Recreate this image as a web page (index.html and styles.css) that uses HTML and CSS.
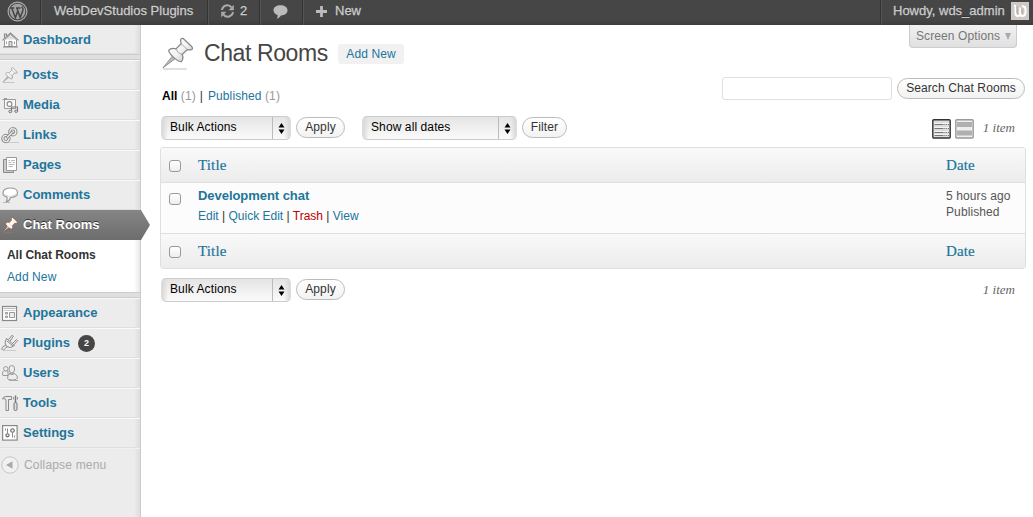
FILE: index.html
```html
<!DOCTYPE html>
<html lang="en">
<head>
<meta charset="utf-8">
<title>Chat Rooms</title>
<link rel="stylesheet" href="styles.css">
</head>
<body>
<svg class="defs" width="0" height="0">
  <defs>
    <linearGradient id="pinfill" x1="0" y1="0" x2="1" y2="1"><stop offset="0" stop-color="#fff"/><stop offset=".5" stop-color="#f4f4f4"/><stop offset="1" stop-color="#bbb"/></linearGradient>
    <symbol id="pin" viewBox="0 0 30 32">
      <path d="M1 31H24" stroke="#999" stroke-opacity=".6"/>
      <path d="M10.500 18 L.8 30 L13.500 20.500Z" fill="#bbb" stroke="#888" stroke-width=".8"/>
      <path d="M18 3.500 Q18 .8 20.500 1.500 L29 9.500 Q30.500 12.500 27 12.500 L24.500 12.200 L19.500 17 Q21.500 21 18.500 24 Q16 24 11.500 20 Q6.500 15.500 6.500 12.800 Q9 10 13.500 11.500 L18.500 6.500Z" class="pinbody"/>
      <path d="M18.500 6.500L24.500 12.200M13.500 11.500Q15 16 19.500 17" class="pinline"/>
    </symbol>
  </defs>
</svg>

<header class="adminbar">
  <a class="bar-item bar-logo">
    <svg width="21" height="21" viewBox="0 0 21 21"><circle cx="10.500" cy="10.500" r="9.400" fill="none" stroke="#aaa" stroke-width="1.200"/><circle cx="10.500" cy="10.500" r="7.800" fill="#a2a2a2"/><path d="M3.300 7h4M9 7h4.500M4.800 7.200L8.400 16.800L10.900 9.500M10 7.200L13.200 16.600L16 9.200Q16.300 7 14.700 5.600" fill="none" stroke="#464646" stroke-width="1.500"/></svg>
  </a>
  <a class="bar-item bar-site">WebDevStudios Plugins</a>
  <a class="bar-item bar-updates">
    <svg width="15" height="14" viewBox="0 0 15 14"><path d="M2 6A5.300 5.300 0 0 1 11.500 3.400M13 8A5.300 5.300 0 0 1 3.500 10.600" fill="none" stroke="#aaa" stroke-width="2"/><path d="M13.800 .8V6.200H8.600ZM1.200 13.200V7.800H6.400Z" fill="#aaa"/></svg>
    <span>2</span>
  </a>
  <a class="bar-item bar-comments">
    <svg width="15" height="14" viewBox="0 0 15 14"><path d="M7.500 .2C11.600 .2 14.500 2.200 14.500 5.300S11.900 10.300 8 10.400C7 12 5.500 13.200 3.800 13.800Q4.900 11.500 4.600 9.900C2.100 9.200 .5 7.600 .5 5.300C.5 2.200 3.400 .2 7.500 .2Z" fill="#bbb"/></svg>
  </a>
  <a class="bar-item bar-new">
    <svg width="11" height="11" viewBox="0 0 11 11"><path d="M5.500 0V11M0 5.500H11" stroke="#bbb" stroke-width="2.800"/></svg>
    <span>New</span>
  </a>
  <a class="bar-item bar-user">
    <span>Howdy, wds_admin</span>
    <svg width="18" height="18" viewBox="0 0 18 18"><rect x=".5" y=".5" width="17" height="17" fill="#cfc8c3" stroke="#ccc"/><path d="M3 3.500Q4.500 3.500 4.500 5V11Q4.500 14 7 14Q9.200 14 9.200 11V5.500M9.200 11Q9.200 14 11.500 14Q14.500 14 14.500 10V7Q14.500 4.500 11 4" fill="none" stroke="#fff" stroke-width="2"/><path d="M6 4V10.500Q6 12 7.200 12M11 6.500V11.500" stroke="#a9a09b" fill="none"/></svg>
  </a>
</header>

<div class="page">
  <nav class="menu">
    <a class="menu-item first"><svg class="mi" viewBox="0 0 18 18"><path d="M3.500 9V15.500H15.500V9L9.500 3.500Z" fill="#fff" stroke="#999"/><path d="M3.500 6.500V3H5.500V5M1.500 9.300L9.500 2L17.500 9.300" fill="none" stroke="#888" stroke-width="1.100"/><path d="M9.500 4.200L14 8.500H5Z" fill="#ddd"/><path d="M8 15.500V10.500H11V15.500Z" fill="#ddd" stroke="#888"/><path d="M5.500 10.500V13M13.500 10.500V13" stroke="#999"/><path d="M2 16H17" stroke="#888"/></svg>Dashboard</a>
    <div class="separator"></div>
    <a class="menu-item"><svg class="mi pin-s"><use href="#pin"/></svg>Posts</a>
    <a class="menu-item"><svg class="mi" viewBox="0 0 18 18"><path d="M1.500 3.500H14.500V12.500H3.500V4M3 2.500H6" fill="#f7f7f7" stroke="#999"/><circle cx="8.500" cy="8" r="2.400" fill="#fff" stroke="#888" stroke-width="1.100"/><path d="M10.500 15.500V11H16.500V15" fill="none" stroke="#777" stroke-width="1.100"/><ellipse cx="9.300" cy="15.500" rx="1.500" ry="1.200" fill="#ddd" stroke="#777"/><ellipse cx="15.200" cy="15.200" rx="1.500" ry="1.200" fill="#ddd" stroke="#777"/></svg>Media</a>
    <a class="menu-item"><svg class="mi" viewBox="0 0 18 18"><path d="M4 16.500H18" stroke="#ccc"/><g fill="none" stroke="#888" stroke-width="3.200"><rect x="8.800" y="2.800" width="6" height="6" rx="2.800" transform="rotate(10 12 6)"/><rect x="2" y="9.500" width="6" height="6" rx="2.800" transform="rotate(10 5 12)"/></g><g fill="none" stroke="#eee" stroke-width="1.300"><rect x="8.800" y="2.800" width="6" height="6" rx="2.800" transform="rotate(10 12 6)"/><rect x="2" y="9.500" width="6" height="6" rx="2.800" transform="rotate(10 5 12)"/></g><path d="M5.500 12L11.800 5.800" stroke="#888" stroke-width="3"/><path d="M6 11.500L11.300 6.300" stroke="#eee" stroke-width="1.200"/></svg>Links</a>
    <a class="menu-item"><svg class="mi" viewBox="0 0 18 18"><path d="M5.500 3.500H2.500V16.500H12.500V14" fill="#ccc" stroke="#888"/><path d="M5.500 1.500H15.500V14.500H5.500Z" fill="#fff" stroke="#999"/><path d="M7.500 4.500H9M10 4.500H14M7.500 6.500H10.500M11.500 6.500H14M7.500 8.500H13.500M7.500 10.500H12" stroke="#bbb"/></svg>Pages</a>
    <a class="menu-item"><svg class="mi" viewBox="0 0 18 18"><path d="M9.500 2C13.500 2 16.500 4 16.500 6.700S13.500 11.300 9.500 11.500Q8.500 15 5 16Q6.500 14 6.100 11C3.500 10.400 2 8.900 2 6.900C2 4 5.300 2 9.500 2Z" fill="#fff" stroke="#999" stroke-width="1.200"/><path d="M3.500 8Q9.500 12 15.500 7.500Q14 10.600 9.500 10.600Q4.500 10.600 3.500 8Z" fill="#ccc"/><path d="M2 16.500H9" stroke="#bbb"/></svg>Comments</a>
    <a class="menu-item current"><svg class="mi pin-s pin-red"><use href="#pin"/></svg>Chat Rooms<svg class="arrow" width="9" height="30" viewBox="0 0 9 30"><defs><linearGradient id="ag" x1="0" y1="0" x2="0" y2="1"><stop offset="0" stop-color="#858585"/><stop offset="1" stop-color="#6d6d6d"/></linearGradient></defs><path d="M0 0L9 15L0 30Z" fill="url(#ag)"/></svg></a>
    <div class="submenu">
      <a class="sub-current">All Chat Rooms</a>
      <a>Add New</a>
    </div>
    <div class="separator"></div>
    <a class="menu-item"><svg class="mi" viewBox="0 0 18 18"><rect x="1.500" y="2.500" width="14" height="14" fill="#fff" stroke="#888" stroke-width="1.200"/><path d="M2.500 4.500H14.500" stroke="#bbb"/><path d="M3 6.500H14" stroke="#ccc"/><path d="M4.500 8.500H6.500V10H4.500ZM4.500 12H6.500V13.500H4.500ZM8.500 8.500H13.500V13.500H8.500Z" fill="#eee" stroke="#999"/></svg>Appearance</a>
    <a class="menu-item"><svg class="mi" viewBox="0 0 18 18"><path d="M3 16.500H15" stroke="#ccc"/><path d="M1 16Q0 13.500 3 12L5 11M2 16.500Q4.500 14 6.500 12.500" fill="none" stroke="#888"/><path d="M5.500 4.500L13.500 11.500Q9 15 5.500 12.500Q2.500 9 5.500 4.500Z" fill="#eee" stroke="#888"/><path d="M7.500 5.500L11 1.300L12.300 2.300L9.200 7M11.500 9.500L15.500 5.500L16.600 6.600L13 10.700M6 7L12 12" fill="none" stroke="#888"/></svg>Plugins<span class="count">2</span></a>
    <a class="menu-item"><svg class="mi" viewBox="0 0 18 18"><g fill="#eee" stroke="#999"><path d="M1.500 11Q1.500 6.500 4 6.500L7 7V11.500H2Z"/><circle cx="4.800" cy="4.800" r="2.200"/><path d="M6.500 14.500Q7 9 10.500 9Q16 9.500 16.500 14Q16 16 11.500 16T6.500 14.500Z"/><path d="M8 5Q8 1.500 10.800 1.500T13.600 5Q13.500 9 10.800 9T8 5Z"/></g><path d="M7.800 9.500Q11 12 13.500 9.500" fill="none" stroke="#999"/><path d="M8 16.500H17" stroke="#aaa"/></svg>Users</a>
    <a class="menu-item"><svg class="mi" viewBox="0 0 18 18"><path d="M1.500 5Q2.500 2.500 5 2.500H10.500V5.500H7.500V16.500H5V5.500Q3.500 4 1.500 5Z" fill="#eee" stroke="#888"/><path d="M14.500 1.500V9" stroke="#777" stroke-width="1.500"/><rect x="13" y="8.500" width="3" height="8" rx="1.200" fill="#ddd" stroke="#777"/><path d="M12.500 3V5.500M16.500 3V5.500" stroke="#999"/></svg>Tools</a>
    <a class="menu-item"><svg class="mi" viewBox="0 0 18 18"><rect x="1.600" y="1.600" width="14.500" height="14.500" fill="#fff" stroke="#888" stroke-width="1.200"/><path d="M6.500 4.500V9M11.500 9V13.500M4.500 4.500V6.500M13.500 11.500V13.500" stroke="#888"/><circle cx="6.500" cy="11.300" r="1.600" fill="#eee" stroke="#666" stroke-width="1.100"/><circle cx="11.500" cy="6.500" r="1.800" fill="#eee" stroke="#666" stroke-width="1.100"/></svg>Settings</a>
    <a class="collapse"><svg width="18" height="18" viewBox="0 0 18 18"><circle cx="9" cy="9" r="8.200" fill="#f1f1f1" stroke="#c6c6c6"/><path d="M5 9L11.500 5.200V12.800Z" fill="#aaa"/></svg>Collapse menu</a>
  </nav>

  <main class="content">
    <a class="screen-options">Screen Options <i></i></a>
    <div class="heading">
      <svg class="pin-l" width="31" height="33"><use href="#pin"/></svg>
      <h1>Chat Rooms</h1>
      <a class="add-new">Add New</a>
    </div>
    <div class="filters">
      <div class="views"><b>All</b> <span>(1)</span><em>|</em><a>Published</a> <span>(1)</span></div>
      <div class="search"><input type="text" class="search-input"><button class="button">Search Chat Rooms</button></div>
    </div>
    <div class="tablenav">
      <div class="select bulk"><span>Bulk Actions</span><i><svg width="7" height="11" viewBox="0 0 7 11"><path d="M.5 4.500L3.500 0L6.500 4.500ZM.5 6.500L3.500 11L6.500 6.500Z"/></svg></i></div>
      <button class="button apply">Apply</button>
      <div class="select dates"><span>Show all dates</span><i><svg width="7" height="11" viewBox="0 0 7 11"><path d="M.5 4.500L3.500 0L6.500 4.500ZM.5 6.500L3.500 11L6.500 6.500Z"/></svg></i></div>
      <button class="button filter">Filter</button>
      <div class="paging">
        <svg width="19" height="20" viewBox="0 0 19 20"><rect x=".8" y=".8" width="17.400" height="18.200" rx="1" fill="#ddd" stroke="#333" stroke-width="1.400"/><path d="M2 4.500H17M2 8.500H17M2 12.500H17M2 15.500H17" stroke="#f4f4f4"/><path d="M2.500 5.500H11M2.500 9.500H11M2.500 13.500H11M2.500 16.500H11" stroke="#777"/><path d="M11.500 5.500H17M11.500 9.500H17M11.500 13.500H17M11.500 16.500H17" stroke="#777" stroke-dasharray="1.200 1"/></svg>
        <svg width="19" height="20" viewBox="0 0 19 20"><rect x=".8" y=".8" width="17.400" height="18.200" rx="1" fill="#eee" stroke="#999" stroke-width="1.400"/><path d="M2 3H17V8H2ZM2 11.500H17V16.500H2Z" fill="#b0b0b0"/></svg>
        <span class="items">1 item</span>
      </div>
    </div>
    <section class="table">
      <div class="row head"><i class="check"></i><a>Title</a><a>Date</a></div>
      <div class="row entry">
        <i class="check"></i>
        <div><a class="title">Development chat</a><div class="actions"><a>Edit</a> | <a>Quick Edit</a> | <a class="trash">Trash</a> | <a>View</a></div></div>
        <div class="date">5 hours ago<br>Published</div>
      </div>
      <div class="row head foot"><i class="check"></i><a>Title</a><a>Date</a></div>
    </section>
    <div class="tablenav bottom">
      <div class="select bulk"><span>Bulk Actions</span><i><svg width="7" height="11" viewBox="0 0 7 11"><path d="M.5 4.500L3.500 0L6.500 4.500ZM.5 6.500L3.500 11L6.500 6.500Z"/></svg></i></div>
      <button class="button apply">Apply</button>
      <div class="paging"><span class="items">1 item</span></div>
    </div>
  </main>
</div>
</body>
</html>
```
FILE: styles.css
```css
* { box-sizing: border-box; }
body {
  margin: 0; height: 517px; overflow: hidden; background: #fff; color: #333;
  font: 12px/16px "Liberation Sans", Arial, sans-serif;
}
.defs { position: absolute; }
svg { display: block; flex: none; }
i { font-style: normal; }

.adminbar {
  display: flex; height: 25px; color: #ccc; font-size: 13px; line-height: 22px;
  background: linear-gradient(#464646 0, #464646 19px, #3c3c3c 25px);
  text-shadow: 0 -1px 0 #333; -webkit-text-stroke: .3px #ccc;
}
.bar-item { display: flex; align-items: center; height: 25px; padding-bottom: 3px; border-right: 1px solid #333; box-shadow: 1px 0 0 #555; }
.bar-logo { width: 41px; padding-left: 7px; }
.bar-site { width: 167px; padding-left: 13px; }
.bar-updates { width: 52px; padding-left: 12px; gap: 5px; }
.bar-comments { width: 43px; padding-left: 13px; padding-bottom: 2px; }
.bar-new { padding-left: 13px; gap: 8px; border: 0; box-shadow: none; }
.bar-user { margin-left: auto; width: 153px; padding-left: 12px; gap: 5px; border-right: 0; border-left: 1px solid #333; box-shadow: inset 1px 0 0 #555; padding-bottom: 4px; }
.bar-user span { width: 113px; white-space: nowrap; }

.page { display: flex; height: 492px; }
.menu {
  width: 141px; flex: none; border-right: 1px solid #ccc;
  background: linear-gradient(90deg, transparent 134px, #ddd 140px), #ececec;
}
.menu-item {
  display: flex; align-items: center; height: 30px; padding: 0 0 1px 1px; gap: 4px;
  border-top: 1px solid #f9f9f9; border-bottom: 1px solid #dfdfdf;
  color: #21759b; font-weight: bold; font-size: 13px;
}
.menu-item.first { border-top: 0; height: 29px; padding-top: 3px; }
.mi { width: 18px; height: 18px; }
.pin-s { height: 16px; width: 18px; }
.pinbody { fill: url(#pinfill); stroke: #888; stroke-width: 1.2; stroke-linejoin: round; }
.pin-s .pinbody, .pin-s { stroke-width: 1.6; }
.pinline { fill: none; stroke: #999; stroke-width: .8; }
.separator { height: 6px; background: #dfdfdf; border-top: 1px solid #ccc; border-bottom: 1px solid #ccc; }
.current {
  position: relative; color: #fff; border: 0; padding-top: 1px; margin-right: -1px;
  background: linear-gradient(#858585, #6d6d6d); text-shadow: 0 -1px 0 #333;
}
.pin-red { filter: sepia(.6) hue-rotate(-40deg) saturate(1.1) drop-shadow(0 0 .6px #311); }
.arrow { position: absolute; left: 141px; top: 0; }
.submenu { height: 52px; padding: 4px 0 0 7px; display: flex; flex-direction: column; background: linear-gradient(90deg, transparent 134px, #e8e8e8 140px), #fff; }
.submenu a { line-height: 22px; color: #21759b; letter-spacing: .1px; }
.submenu .sub-current { color: #333; font-weight: bold; letter-spacing: -.05px; }
.count { width: 17px; height: 17px; margin: 1px 0 0 4px; border-radius: 9px; background: #464646; color: #fff; font-size: 9px; line-height: 17px; text-align: center; }
.collapse { display: flex; align-items: center; gap: 5px; height: 32px; padding-left: 1px; color: #aaa; border-top: 1px solid #f0f0f0; letter-spacing: .18px; }

.content { position: relative; flex: 1; padding: 9px 7px 0 19px; letter-spacing: .1px; }
.screen-options {
  position: absolute; right: 16px; top: 0; width: 108px; height: 23px; padding-left: 6px; line-height: 22px; white-space: nowrap;
  border: 1px solid #ccc; border-top: 0; border-radius: 0 0 4px 4px; background: linear-gradient(#f1f1f1, #e0e0e0); color: #777;
}
.screen-options i { display: inline-block; margin-left: 1px; border: 3.5px solid transparent; border-top: 7px solid #aaa; border-bottom: 0; }
.heading { display: flex; align-items: center; height: 40px; padding-left: 2px; }
.pin-l { margin-top: -2px; }
h1 { margin: 0 0 0 11px; width: 134px; font-size: 23px; line-height: 34px; padding-bottom: 2px; font-weight: normal; letter-spacing: -.4px; color: #464646; white-space: nowrap; }
.add-new { width: 66px; height: 20px; line-height: 20px; border-radius: 3px; background: #f1f1f1; color: #21759b; text-align: center; }
.filters { display: flex; justify-content: space-between; height: 39px; padding: 3px 1px 0 2px; }
.views { padding-top: 11px; color: #999; }
.views b { color: #000; letter-spacing: 0; }
.views em { font-style: normal; color: #333; margin: 0 5px 0 4px; }
.views a { color: #21759b; }
.search { display: flex; align-items: center; gap: 5px; height: 23px; }
.search-input { width: 170px; height: 23px; border: 1px solid #dfdfdf; border-radius: 3px; background: #fff; outline: 0; }
.button {
  width: 128px; height: 21px; padding: 0 0 1px; border: 1px solid #bbb; border-radius: 11px;
  background: linear-gradient(#fff, #f2f2f2); color: #333; font: inherit; letter-spacing: .1px; line-height: 18px; white-space: nowrap; text-align: center;
}
.tablenav { display: flex; align-items: center; height: 34px; padding: 0 11px 6px 1px; }
.select {
  display: flex; justify-content: space-between; height: 24px; margin-top: 2px; border-radius: 5px; color: #000; line-height: 21px;
  border: 1px solid #ddd; border-top-color: #ccc; border-bottom-color: #ccc;
  background: linear-gradient(90deg, #d8d8d8, transparent 6px, transparent calc(100% - 6px), #d8d8d8), linear-gradient(#e4e4e4, #fbfbfb);
}
.select span { padding-left: 8px; }
.select i { display: flex; width: 18px; align-items: center; justify-content: center; border-left: 1px solid #bbb; }
.bulk { width: 130px; }
.apply { width: 49px; margin-left: 5px; }
.dates { width: 155px; margin-left: 17px; }
.filter { width: 45px; margin-left: 5px; }
.paging { display: flex; align-items: center; gap: 4px; margin-left: auto; }
.paging svg { margin-top: 3px; }
.items { margin: 2px 0 0 5px; font: italic 13px/18px "Liberation Serif", serif; color: #666; letter-spacing: 0; }
.table { width: 866px; border: 1px solid #dfdfdf; border-radius: 3px; background: #fcfcfc; overflow: hidden; }
.row { display: grid; grid-template-columns: 37px 748px 1fr; }
.head { height: 35px; align-items: center; border-bottom: 1px solid #dfdfdf; background: linear-gradient(#f9f9f9, #ececec); font: 15px/20px "Liberation Serif", serif; color: #21759b; letter-spacing: .15px; -webkit-text-stroke: .2px #21759b; }
.foot { height: 34px; border: 0; }
.check { width: 12px; height: 12px; margin: 2px 0 0 8px; border: 1px solid #999; border-radius: 3px; background: linear-gradient(#fff, #eee); }
.entry { height: 51px; padding-top: 5px; border-bottom: 1px solid #dfdfdf; }
.entry .check { margin-top: 5px; }
.title { display: block; font-weight: bold; font-size: 13px; letter-spacing: -.05px; color: #21759b; }
.actions { padding-top: 4px; letter-spacing: 0; }
.actions a { color: #21759b; }
.actions .trash { color: #b00; }
.date { color: #555; }
.bottom { height: 40px; padding-bottom: 0; }
```
